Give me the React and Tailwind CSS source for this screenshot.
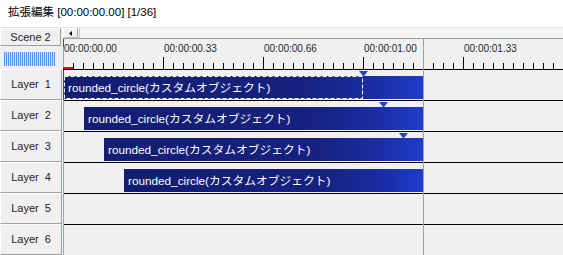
import React from "react";

const layers = [
  { label: "Layer 1", clip: "ml-[1px] w-[359px]", marker: "left-[296px]", selected: true },
  { label: "Layer 2", clip: "ml-[21px] w-[339px]", marker: "left-[316px]" },
  { label: "Layer 3", clip: "ml-[41px] w-[319px]", marker: "left-[336px]" },
  { label: "Layer 4", clip: "ml-[61px] w-[299px]", marker: null },
  { label: "Layer 5" },
  { label: "Layer 6" },
];

const times = ["00:00:00.00", "00:00:00.33", "00:00:00.66", "00:00:01.00", "00:00:01.33"];

const Marker = ({ className }) => (
  <svg className={`absolute top-[1px] ${className}`} width="9" height="5" viewBox="0 0 9 5">
    <polygon points="0,0 9,0 5,5 4,5" fill="#2444c4" />
  </svg>
);

const Clip = ({ className, selected }) => (
  <div
    className={`relative h-[23px] flex items-center pl-[4px] pt-[1px] text-white text-[11.75px] whitespace-nowrap overflow-hidden bg-[linear-gradient(90deg,#131d72_0%,#15217e_65%,#1a2ca0_85%,#1f3bca_100%)] ${className}`}
  >
    rounded_circle(カスタムオブジェクト)
    {selected && (
      <svg className="absolute left-0 top-0" width="299" height="23">
        <rect x="0.5" y="0.5" width="298" height="22" fill="none" stroke="#ffffff" strokeDasharray="4 2" />
      </svg>
    )}
  </div>
);

const App = () => {
  return (
    <div className="w-[563px] h-[255px] overflow-hidden bg-[#f0f0f0] text-[#1e1e1e] [font-family:'Liberation_Sans','Noto_Sans_CJK_JP',sans-serif]">
      <div className="h-[28px] bg-white border-b border-[#e3e3e3] pl-[8px] pt-[4px] text-[11.5px] leading-[17px] text-black">
        拡張編集 [00:00:00.00] [1/36]
      </div>

      <div className="flex">
        {/* left column */}
        <div className="w-[63px] shrink-0">
          <div className="h-[18px] w-[61px] flex items-center justify-center text-[11px] border border-t-white border-l-white border-r-[#a0a0a0] border-b-[#a0a0a0]">
            Scene 2
          </div>
          <div className="ml-[4px] mt-[6px] mb-[3px] h-[14px] w-[51px] flex gap-[1px] bg-[#d2e2fa]">
            {Array.from({ length: 26 }).map((_, i) => (
              <div key={i} className="w-[1px] h-full bg-[#4f92f2]" />
            ))}
          </div>
          {layers.map((l) => (
            <div
              key={l.label}
              className="h-[31px] w-[62px] flex items-center justify-center text-[11px] [word-spacing:3px] border border-t-white border-l-white border-r-[#a0a0a0] border-b-[#a0a0a0]"
            >
              {l.label}
            </div>
          ))}
        </div>

        {/* timeline */}
        <div className="relative flex-1">
          <div className="h-[11px] flex border-b border-[#a0a0a0]">
            <div className="w-[15px] h-full flex items-center justify-center border border-t-white border-l-white border-r-[#a0a0a0] border-b-[#c8c8c8]">
              <svg width="3" height="5" viewBox="0 0 3 5">
                <polygon points="3,0 3,5 0,2.5" fill="#000" />
              </svg>
            </div>
            <div className="ml-[1px] flex-1 h-full border-l border-[#c8c8c8] bg-[#f4f4f4]" />
          </div>

          <div className="h-[31px] border-b border-black flex flex-col">
            <div className="flex pt-[4px] pl-[1px] text-[10px] leading-[12px] text-[#262633]">
              {times.map((t) => (
                <div key={t} className="w-[100px] shrink-0">
                  {t}
                </div>
              ))}
            </div>
            <div className="mt-auto flex items-end h-[12px]">
              {Array.from({ length: 50 }).map((_, i) => (
                <div key={i} className="w-[10px] shrink-0 h-full flex items-end">
                  <div className={`w-[1px] bg-black ${i % 10 === 0 ? "h-[12px]" : "h-[6px]"}`} />
                </div>
              ))}
            </div>
          </div>

          {layers.map((l) => (
            <div key={l.label} className="relative h-[31px] border-b border-black pt-[6px]">
              {l.clip && <Clip className={l.clip} selected={l.selected} />}
              {l.marker && <Marker className={l.marker} />}
            </div>
          ))}

          {/* scene end line */}
          <div className="absolute left-[360px] top-[11px] bottom-0 w-[1px] bg-[#a0a0a0]" />

          {/* current frame cursor */}
          <div className="absolute left-0 top-[11px] h-[8px] w-[1px] bg-[#e01010]" />
          <div className="absolute left-0 top-[19px] h-[22px] w-[1px] bg-[#30d8e0]" />
          <div className="absolute left-0 top-[39px] h-[2px] w-[10px] bg-[#e01010]" />
          <div className="absolute left-0 top-[42px] h-[30px] w-[1px] bg-[#c01818]" />
          <div className="absolute left-0 top-[72px] bottom-0 w-[1px] bg-[#30d8e0]" />
        </div>
      </div>
    </div>
  );
};

export default App;
